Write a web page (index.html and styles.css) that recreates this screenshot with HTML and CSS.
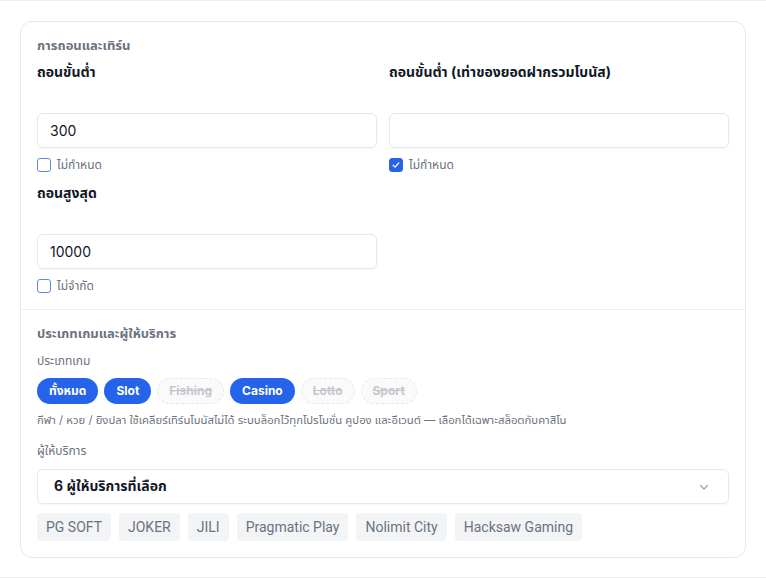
FILE: index.html
```html
<!DOCTYPE html>
<html>
<head>
  <meta name="viewport" content="width=device-width,initial-scale=1.0">
  <title>ตั้งค่าการถอน</title>
  <link rel="stylesheet" href="styles.css">
</head>
<body>
  <div class="page">
    <div class="card">
      <div class="section">
        <div class="section-title">การถอนและเทิร์น</div>
        <div class="grid">
          <div class="field">
            <label class="field-label">ถอนขั้นต่ำ</label>
            <div class="input">300</div>
            <div class="check-row">
              <span class="box"></span>
              <span>ไม่กำหนด</span>
            </div>
          </div>
          <div class="field">
            <label class="field-label">ถอนขั้นต่ำ (เท่าของยอดฝากรวมโบนัส)</label>
            <div class="input"></div>
            <div class="check-row">
              <span class="box checked">
                <svg width="10" height="10" viewBox="0 0 10 10"><path d="M2.2 5.3 L4.1 7.1 L7.8 2.9" fill="none" stroke="#fff" stroke-width="1.3" stroke-linecap="round" stroke-linejoin="round"/></svg>
              </span>
              <span>ไม่กำหนด</span>
            </div>
          </div>
          <div class="field">
            <label class="field-label">ถอนสูงสุด</label>
            <div class="input">10000</div>
            <div class="check-row">
              <span class="box"></span>
              <span>ไม่จำกัด</span>
            </div>
          </div>
        </div>
      </div>

      <div class="section">
        <div class="section-title">ประเภทเกมและผู้ให้บริการ</div>
        <div class="sub-label">ประเภทเกม</div>
        <div class="chips">
          <span class="chip on">ทั้งหมด</span>
          <span class="chip on">Slot</span>
          <span class="chip off">Fishing</span>
          <span class="chip on">Casino</span>
          <span class="chip off">Lotto</span>
          <span class="chip off">Sport</span>
        </div>
        <div class="help">กีฬา / หวย / ยิงปลา ใช้เคลียร์เทิร์นโบนัสไม่ได้ ระบบล็อกไว้ทุกโปรโมชั่น คูปอง และอีเวนต์ — เลือกได้เฉพาะสล็อตกับคาสิโน</div>
        <div class="sub-label provider-label">ผู้ให้บริการ</div>
        <div class="select">
          <span>6 ผู้ให้บริการที่เลือก</span>
          <svg width="12" height="12" viewBox="0 0 12 12"><path d="M2.5 4.5 L6 8 L9.5 4.5" fill="none" stroke="#9ca3af" stroke-width="1.2" stroke-linecap="round" stroke-linejoin="round"/></svg>
        </div>
        <div class="tags">
          <span class="tag">PG SOFT</span>
          <span class="tag">JOKER</span>
          <span class="tag">JILI</span>
          <span class="tag">Pragmatic Play</span>
          <span class="tag">Nolimit City</span>
          <span class="tag">Hacksaw Gaming</span>
        </div>
      </div>
    </div>
  </div>
</body>
</html>
```

FILE: styles.css
```css
body {
  margin: 0;
  background: #fff;
  font-family: Inter, "Noto Sans Thai", "Noto Sans", sans-serif;
  color: #111827;
}

.page {
  border-top: 1px solid #eeeff1;
  border-bottom: 1px solid #eeeff1;
  padding: 20px 20px 19px;
}

.card {
  border: 1px solid #e5e7eb;
  border-radius: 12px;
  background: #fff;
}

.section { padding: 15px 16px 14px; }
.section + .section {
  border-top: 1px solid #eeeff1;
  padding-top: 15px;
  padding-bottom: 16px;
}

.section-title {
  font-size: 13px;
  line-height: 16px;
  font-weight: 700;
  color: #6b7280;
  margin-bottom: 9px;
}

.grid {
  display: grid;
  grid-template-columns: 1fr 1fr;
  column-gap: 12px;
  row-gap: 9px;
}

.field { display: flex; flex-direction: column; }
.field-label {
  font-size: 14px;
  line-height: 20px;
  font-weight: 700;
  min-height: 44px;
  margin-bottom: 7px;
}

.input {
  height: 35px;
  box-sizing: border-box;
  border: 1px solid #e5e7eb;
  border-radius: 6px;
  padding: 0 12px;
  font-size: 14px;
  line-height: 33px;
  box-shadow: 0 1px 2px rgba(0, 0, 0, 0.04);
}

.check-row {
  display: flex;
  align-items: center;
  gap: 6px;
  margin-top: 8px;
  height: 18px;
  font-size: 12px;
  color: #6b7280;
}
.box {
  width: 14px;
  height: 14px;
  box-sizing: border-box;
  border: 1.5px solid #5b8def;
  border-radius: 3px;
  display: flex;
  align-items: center;
  justify-content: center;
}
.box.checked { background: #2563eb; border-color: #2563eb; }

.sub-label {
  font-size: 12px;
  line-height: 18px;
  color: #6b7280;
  margin-top: 11px;
}
.provider-label { margin-top: 14px; }

.chips { display: flex; gap: 6px; margin-top: 8px; }
.chip {
  height: 26px;
  box-sizing: border-box;
  padding: 0 11px;
  border-radius: 13px;
  font-size: 12px;
  font-weight: 700;
  line-height: 24px;
  border: 1px solid transparent;
}
.chip.on { background: #2563eb; color: #fff; }
.chip.off {
  background: #fafafa;
  border: 1px dashed #e5e7eb;
  color: #c4c8cf;
  text-decoration: line-through;
}

.help {
  font-size: 11.3px;
  line-height: 16px;
  color: #6b7280;
  margin-top: 8px;
}

.select {
  margin-top: 9px;
  height: 35px;
  box-sizing: border-box;
  border: 1px solid #e5e7eb;
  border-radius: 6px;
  display: flex;
  align-items: center;
  justify-content: space-between;
  padding: 0 18px 0 16px;
  font-size: 14px;
  font-weight: 700;
  box-shadow: 0 1px 2px rgba(0, 0, 0, 0.04);
}

.tags { display: flex; gap: 8px; margin-top: 9px; }
.tag {
  height: 28px;
  line-height: 28px;
  padding: 0 9px;
  background: #f3f4f6;
  border-radius: 4px;
  font-family: Roboto, "Noto Sans Thai", sans-serif;
  font-size: 14px;
  color: #6b7280;
}
```
